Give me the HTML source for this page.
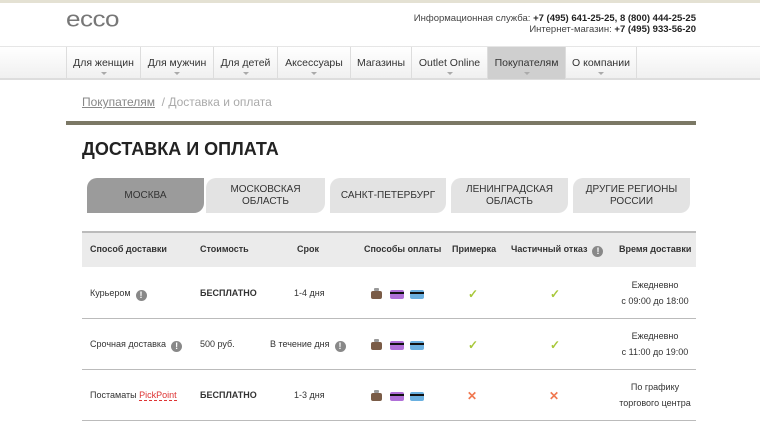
<!DOCTYPE html>
<html><head><meta charset="utf-8"><style>
*{margin:0;padding:0;box-sizing:border-box}
body{width:760px;height:428px;overflow:hidden;background:#fff;font-family:"Liberation Sans",Arial,sans-serif;color:#333;position:relative}
.a{position:absolute}
.topbar{left:0;top:0;width:760px;height:3px;background:#e4e1d3}
.logo{left:66px;top:6px;font-size:26px;color:#777;letter-spacing:-0.5px;transform:scaleY(0.85);transform-origin:top left}
.info{right:64px;top:13px;font-size:9.5px;text-align:right;line-height:11px;color:#444}
.info b{color:#222;font-weight:bold}
.nav{left:0;top:46px;width:760px;height:34px;background:linear-gradient(#fff,#f0f0f0);border-top:1px solid #e6e6e6;border-bottom:2px solid #ddd}
.ni{position:absolute;top:0;height:32px;font-size:10.5px;color:#333;text-align:center;padding-top:10px;border-left:1px solid #ddd;white-space:nowrap}
.ni.d:after{content:"";position:absolute;left:50%;margin-left:-3px;top:25px;border:3px solid transparent;border-top:3px solid #aaa}
.ni.act{background:#cfcfcf}
.bc{left:82px;top:95px;font-size:12px;color:#aaa}
.bc u{color:#888}
.bar{left:66px;top:121px;width:630px;height:4px;background:#7b7865}
h1{position:absolute;left:82px;top:139px;font-size:18px;font-weight:bold;color:#222}
.tab{position:absolute;top:178px;height:35px;background:#e3e3e3;font-size:10px;color:#333;text-align:center;display:flex;align-items:center;justify-content:center;line-height:12px;border-radius:10px 0 10px 0}
.tab.on{background:#9b9b9b;color:#333}
.th{left:82px;top:231px;width:614px;height:36px;background:#ebebeb;border-top:2px solid #bbb}
.t{position:absolute;font-size:9px;line-height:12px;color:#333;white-space:nowrap}
.hb{font-weight:bold}
.ln{position:absolute;left:82px;width:614px;height:1px;background:#bbb}
.ex{display:inline-block;width:11px;height:11px;border-radius:50%;background:#888;color:#fff;font-size:9px;font-weight:bold;text-align:center;line-height:11px;vertical-align:-2px;margin-left:5px}
.ok{position:absolute;color:#a8c83a;font-size:12px;font-weight:bold}
.no{position:absolute;color:#f07850;font-size:12px;font-weight:bold}
.bag{position:absolute;width:11px;height:8px;background:#7a5c47;border-radius:2px}
.bag:before{content:"";position:absolute;left:3px;top:-3px;width:5px;height:3px;background:#999;border-radius:1px}
.cd{position:absolute;width:14px;height:9px;border-radius:2px}
.cd:after{content:"";position:absolute;left:0;top:2px;width:14px;height:2px;background:#111}
</style></head><body>
<div class="a topbar"></div>
<div class="a logo">ecco</div>
<div class="a info">Информационная служба: <b>+7 (495) 641-25-25, 8 (800) 444-25-25</b><br>Интернет-магазин: <b>+7 (495) 933-56-20</b></div>
<div class="a nav">
<div class="ni d" style="left:66px;width:74px">Для женщин</div>
<div class="ni d" style="left:140px;width:73px">Для мужчин</div>
<div class="ni d" style="left:213px;width:64px">Для детей</div>
<div class="ni d" style="left:277px;width:73px">Аксессуары</div>
<div class="ni" style="left:350px;width:61px">Магазины</div>
<div class="ni d" style="left:411px;width:76px">Outlet Online</div>
<div class="ni d act" style="left:487px;width:78px">Покупателям</div>
<div class="ni d" style="left:565px;width:72px;border-right:1px solid #ddd">О компании</div>
</div>
<div class="a bc"><u>Покупателям</u> &nbsp;/ Доставка и оплата</div>
<div class="a bar"></div>
<h1>ДОСТАВКА И ОПЛАТА</h1>
<div class="tab on" style="left:87px;width:117px">МОСКВА</div>
<div class="tab" style="left:206px;width:119px">МОСКОВСКАЯ<br>ОБЛАСТЬ</div>
<div class="tab" style="left:330px;width:116px">САНКТ-ПЕТЕРБУРГ</div>
<div class="tab" style="left:451px;width:117px">ЛЕНИНГРАДСКАЯ<br>ОБЛАСТЬ</div>
<div class="tab" style="left:573px;width:117px">ДРУГИЕ РЕГИОНЫ<br>РОССИИ</div>
<div class="a th"></div>
<div class="t hb" style="left:90px;top:243px">Способ доставки</div>
<div class="t hb" style="left:200px;top:243px">Стоимость</div>
<div class="t hb" style="left:297px;top:243px">Срок</div>
<div class="t hb" style="left:364px;top:243px">Способы оплаты</div>
<div class="t hb" style="left:452px;top:243px">Примерка</div>
<div class="t hb" style="left:511px;top:243px">Частичный отказ<span class="ex">!</span></div>
<div class="t hb" style="left:619px;top:243px">Время доставки</div>

<div class="t" style="left:90px;top:287px">Курьером<span class="ex">!</span></div>
<div class="t hb" style="left:200px;top:287px">БЕСПЛАТНО</div>
<div class="t" style="left:294px;top:287px">1-4 дня</div>
<div class="t" style="left:617px;top:277px;text-align:center;width:76px;line-height:16px">Ежедневно<br>с 09:00 до 18:00</div>
<div class="ln" style="top:318px"></div>
<div class="t" style="left:90px;top:338px">Срочная доставка<span class="ex">!</span></div>
<div class="t" style="left:200px;top:338px">500 руб.</div>
<div class="t" style="left:270px;top:338px">В течение дня<span class="ex">!</span></div>
<div class="t" style="left:617px;top:328px;text-align:center;width:76px;line-height:16px">Ежедневно<br>с 11:00 до 19:00</div>
<div class="ln" style="top:369px"></div>
<div class="t" style="left:90px;top:389px">Постаматы <span style="color:#d33;border-bottom:1px dashed #d33">PickPoint</span></div>
<div class="t hb" style="left:200px;top:389px">БЕСПЛАТНО</div>
<div class="t" style="left:294px;top:389px">1-3 дня</div>
<div class="t" style="left:617px;top:379px;text-align:center;width:76px;line-height:16px">По графику<br>торгового центра</div>
<div class="ln" style="top:420px"></div>

<div class="bag" style="left:371px;top:291px"></div><div class="cd" style="left:390px;top:290px;background:#b070d8"></div><div class="cd" style="left:410px;top:290px;background:#6ab0e0"></div>
<div class="bag" style="left:371px;top:342px"></div><div class="cd" style="left:390px;top:341px;background:#b070d8"></div><div class="cd" style="left:410px;top:341px;background:#6ab0e0"></div>
<div class="bag" style="left:371px;top:393px"></div><div class="cd" style="left:390px;top:392px;background:#b070d8"></div><div class="cd" style="left:410px;top:392px;background:#6ab0e0"></div>
<div class="ok" style="left:468px;top:287px">✓</div><div class="ok" style="left:550px;top:287px">✓</div>
<div class="ok" style="left:468px;top:338px">✓</div><div class="ok" style="left:550px;top:338px">✓</div>
<div class="no" style="left:467px;top:389px">✕</div><div class="no" style="left:549px;top:389px">✕</div>
</body></html>
